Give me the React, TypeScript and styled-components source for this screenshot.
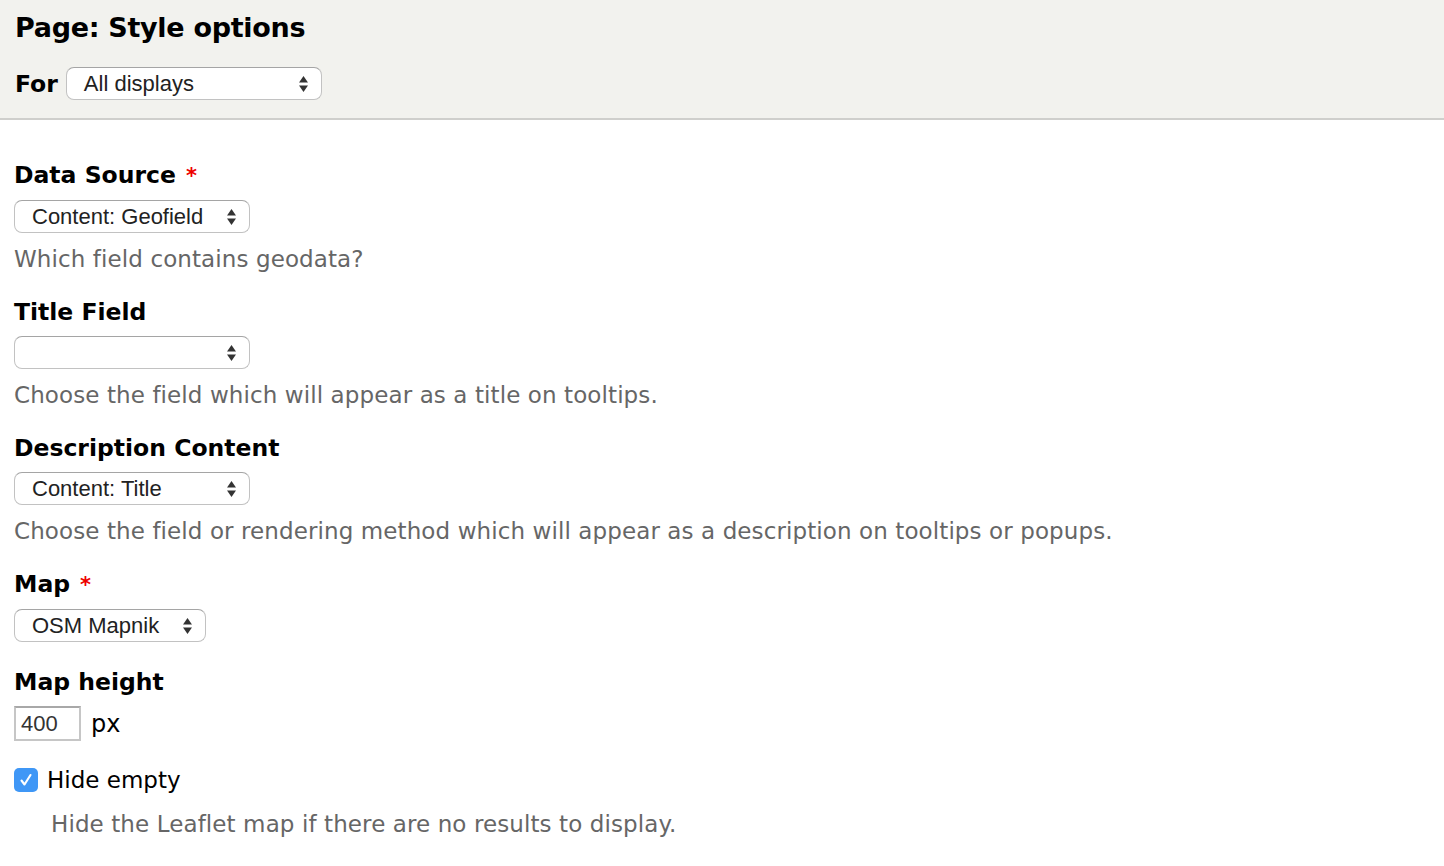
import React from 'react';
import styled, { createGlobalStyle } from 'styled-components';

const GlobalStyle = createGlobalStyle`
    html, body {
        margin: 0;
        padding: 0;
        background: #fff;
        font-family: "DejaVu Sans", "Open Sans", sans-serif;
        color: #000;
    }
`;

interface IField {
    label: string;
    required?: boolean;
    value: string;
    width: number;
    description: string;
}

const fields: IField[] = [
    { label: 'Data Source', required: true, value: 'Content: Geofield', width: 236, description: 'Which field contains geodata?' },
    { label: 'Title Field', value: '', width: 236, description: 'Choose the field which will appear as a title on tooltips.' },
    { label: 'Description Content', value: 'Content: Title', width: 236, description: 'Choose the field or rendering method which will appear as a description on tooltips or popups.' },
];

const Arrows: React.FC = () => (
    <svg width="11" height="18" viewBox="0 0 11 18">
        <path d="M5.5 1 L10 7.5 H1 Z" fill="#333" />
        <path d="M5.5 17 L10 10.5 H1 Z" fill="#333" />
    </svg>
);

const Select: React.FC<{ value: string; width: number }> = ({ value, width }) => (
    <SelectBox $width={width}>
        <span>{value}</span>
        <Arrows />
    </SelectBox>
);

const App: React.FC = () => {
    return (
        <Page>
            <GlobalStyle />
            <Header>
                <Title>Page: Style options</Title>
                <ForRow>
                    <ForLabel>For</ForLabel>
                    <Select value="All displays" width={256} />
                </ForRow>
            </Header>
            <Form>
                {fields.map((f) => (
                    <Field key={f.label}>
                        <Label>
                            {f.label}
                            {f.required && <Required>*</Required>}
                        </Label>
                        <Select value={f.value} width={f.width} />
                        <Description>{f.description}</Description>
                    </Field>
                ))}
                <Field $space={25}>
                    <Label>
                        Map<Required>*</Required>
                    </Label>
                    <Select value="OSM Mapnik" width={192} />
                </Field>
                <Field $space={0}>
                    <Label>Map height</Label>
                    <InputRow>
                        <NumberInput>400</NumberInput>
                        <Unit>px</Unit>
                    </InputRow>
                </Field>
                <CheckRow>
                    <CheckBox>
                        <svg width="14" height="14" viewBox="0 0 14 14">
                            <path d="M2.5 7.5 L5.5 11.5 L11.5 2" fill="none" stroke="#fff" strokeWidth="2.1" strokeLinecap="round" strokeLinejoin="round" />
                        </svg>
                    </CheckBox>
                    <CheckLabel>Hide empty</CheckLabel>
                </CheckRow>
                <CheckDescription>Hide the Leaflet map if there are no results to display.</CheckDescription>
            </Form>
        </Page>
    );
};

export default App;

const Page = styled.div`
    width: 1444px;
    min-height: 866px;
`;

const Header = styled.div`
    background-color: #f2f2ee;
    border-bottom: 2px solid #cfcfcc;
    height: 120px;
    box-sizing: border-box;
    padding: 9px 15px 0;
`;

const Title = styled.h1`
    margin: 0;
    font-size: 27px;
    font-weight: bold;
    line-height: 38px;
    letter-spacing: -0.3px;
`;

const ForRow = styled.div`
    display: flex;
    align-items: center;
    gap: 8px;
    margin-top: 20px;
`;

const ForLabel = styled.span`
    font-size: 23.5px;
    font-weight: bold;
`;

const SelectBox = styled.div<{ $width: number }>`
    width: ${(p) => p.$width}px;
    height: 33px;
    box-sizing: border-box;
    display: flex;
    align-items: center;
    justify-content: space-between;
    padding: 0 12px 0 17px;
    background: #fff;
    border: 1.5px solid #c2c2c2;
    border-top-color: #a5a5a5;
    border-radius: 8px;
    font-family: "Liberation Sans", Arial, sans-serif;
    font-size: 22px;
    color: #222;
`;

const Form = styled.div`
    padding: 40px 14px 0;
`;

const Field = styled.div<{ $space?: number }>`
    display: flex;
    flex-direction: column;
    align-items: flex-start;
    margin-bottom: ${(p) => (p.$space ?? 23)}px;
`;

const Label = styled.div`
    font-size: 23.5px;
    font-weight: bold;
    line-height: 30px;
    margin-bottom: 9px;
`;

const Required = styled.span`
    color: #e00;
    margin-left: 10px;
    font-size: 21px;
`;

const Description = styled.div`
    font-size: 23px;
    letter-spacing: 0.1px;
    color: #666;
    line-height: 30px;
    margin-top: 11px;
`;

const InputRow = styled.div`
    display: flex;
    align-items: center;
    gap: 10px;
`;

const NumberInput = styled.div`
    width: 67px;
    height: 35px;
    box-sizing: border-box;
    border: 2px solid #c6c6c6;
    border-top-color: #a8a8a8;
    padding: 0 5px;
    display: flex;
    align-items: center;
    font-family: "Liberation Sans", Arial, sans-serif;
    font-size: 22px;
    color: #333;
`;

const Unit = styled.span`
    font-size: 24px;
`;

const CheckRow = styled.div`
    display: flex;
    align-items: center;
    gap: 9px;
    margin-top: 24px;
`;

const CheckBox = styled.div`
    width: 24px;
    height: 24px;
    border-radius: 5px;
    background: #3f97f6;
    display: flex;
    align-items: center;
    justify-content: center;
`;

const CheckLabel = styled.span`
    font-size: 23px;
    line-height: 30px;
`;

const CheckDescription = styled.div`
    margin: 14px 0 0 37px;
    font-size: 23px;
    letter-spacing: 0.1px;
    line-height: 30px;
    color: #666;
`;
